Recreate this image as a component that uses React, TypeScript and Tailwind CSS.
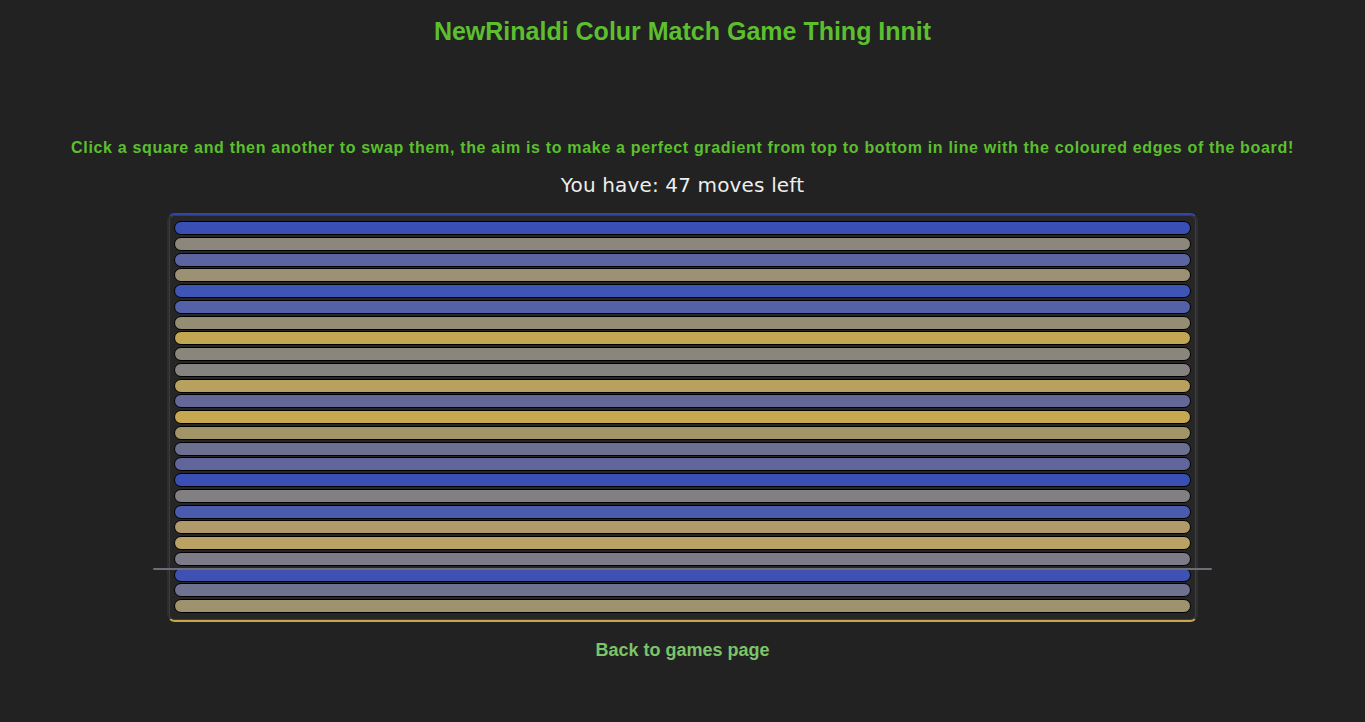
const bars = [
  '#3a4fb3', '#8b877c', '#5b64a0', '#9c9175', '#3f55b5',
  '#5261a8', '#948c73', '#c2a651', '#8a867c', '#85837f',
  '#b8a05e', '#636897', '#c5a84f', '#a19467', '#6c6f8f',
  '#60669a', '#3a4fb3', '#827f83', '#4a5aad', '#b0996a',
  '#b9a263', '#7c7b87', '#3f52b3', '#6e7190', '#9f926e',
];

export default function App() {
  return (
    <div className="min-h-[722px] bg-[#222222] flex flex-col items-center font-['Liberation_Sans',Arial,sans-serif]">
      <h1 className="mt-[17px] text-[25px] leading-[28px] font-bold text-[#5cbf2e]">
        NewRinaldi Colur Match Game Thing Innit
      </h1>
      <p className="mt-[93px] text-[16px] leading-[20px] font-bold tracking-[0.67px] text-[#5cbf2e]">
        Click a square and then another to swap them, the aim is to make a perfect gradient from top to bottom in line with the coloured edges of the board!
      </p>
      <div className="mt-[15px] text-[20px] leading-[24px] text-[#eeeeee] font-['DejaVu_Sans',Verdana,sans-serif] tracking-[0.15px]">
        You have: 47 moves left
      </div>
      <div className="relative mt-[16px] w-[1031px] rounded-[8px] border-2 border-t-[#3346a8] border-b-[#c8a84a] border-x-[#2e2e2e] bg-[#262626]">
        <div className="rounded-[6px] border border-[#3d3d3d] px-[4px] pt-[5px] pb-[6px] flex flex-col gap-[1.75px]">
          {bars.map((c, i) => (
            <div
              key={i}
              className="h-[14px] rounded-full border border-black"
              style={{ backgroundColor: c }}
            />
          ))}
        </div>
        <div className="absolute left-[-16px] right-[-16px] top-[353px] h-[2px] bg-[#6e6e78] rounded-full" />
      </div>
      <a className="mt-[17px] text-[18px] leading-[22px] font-bold text-[#7bc46a]" href="#">
        Back to games page
      </a>
    </div>
  );
}
